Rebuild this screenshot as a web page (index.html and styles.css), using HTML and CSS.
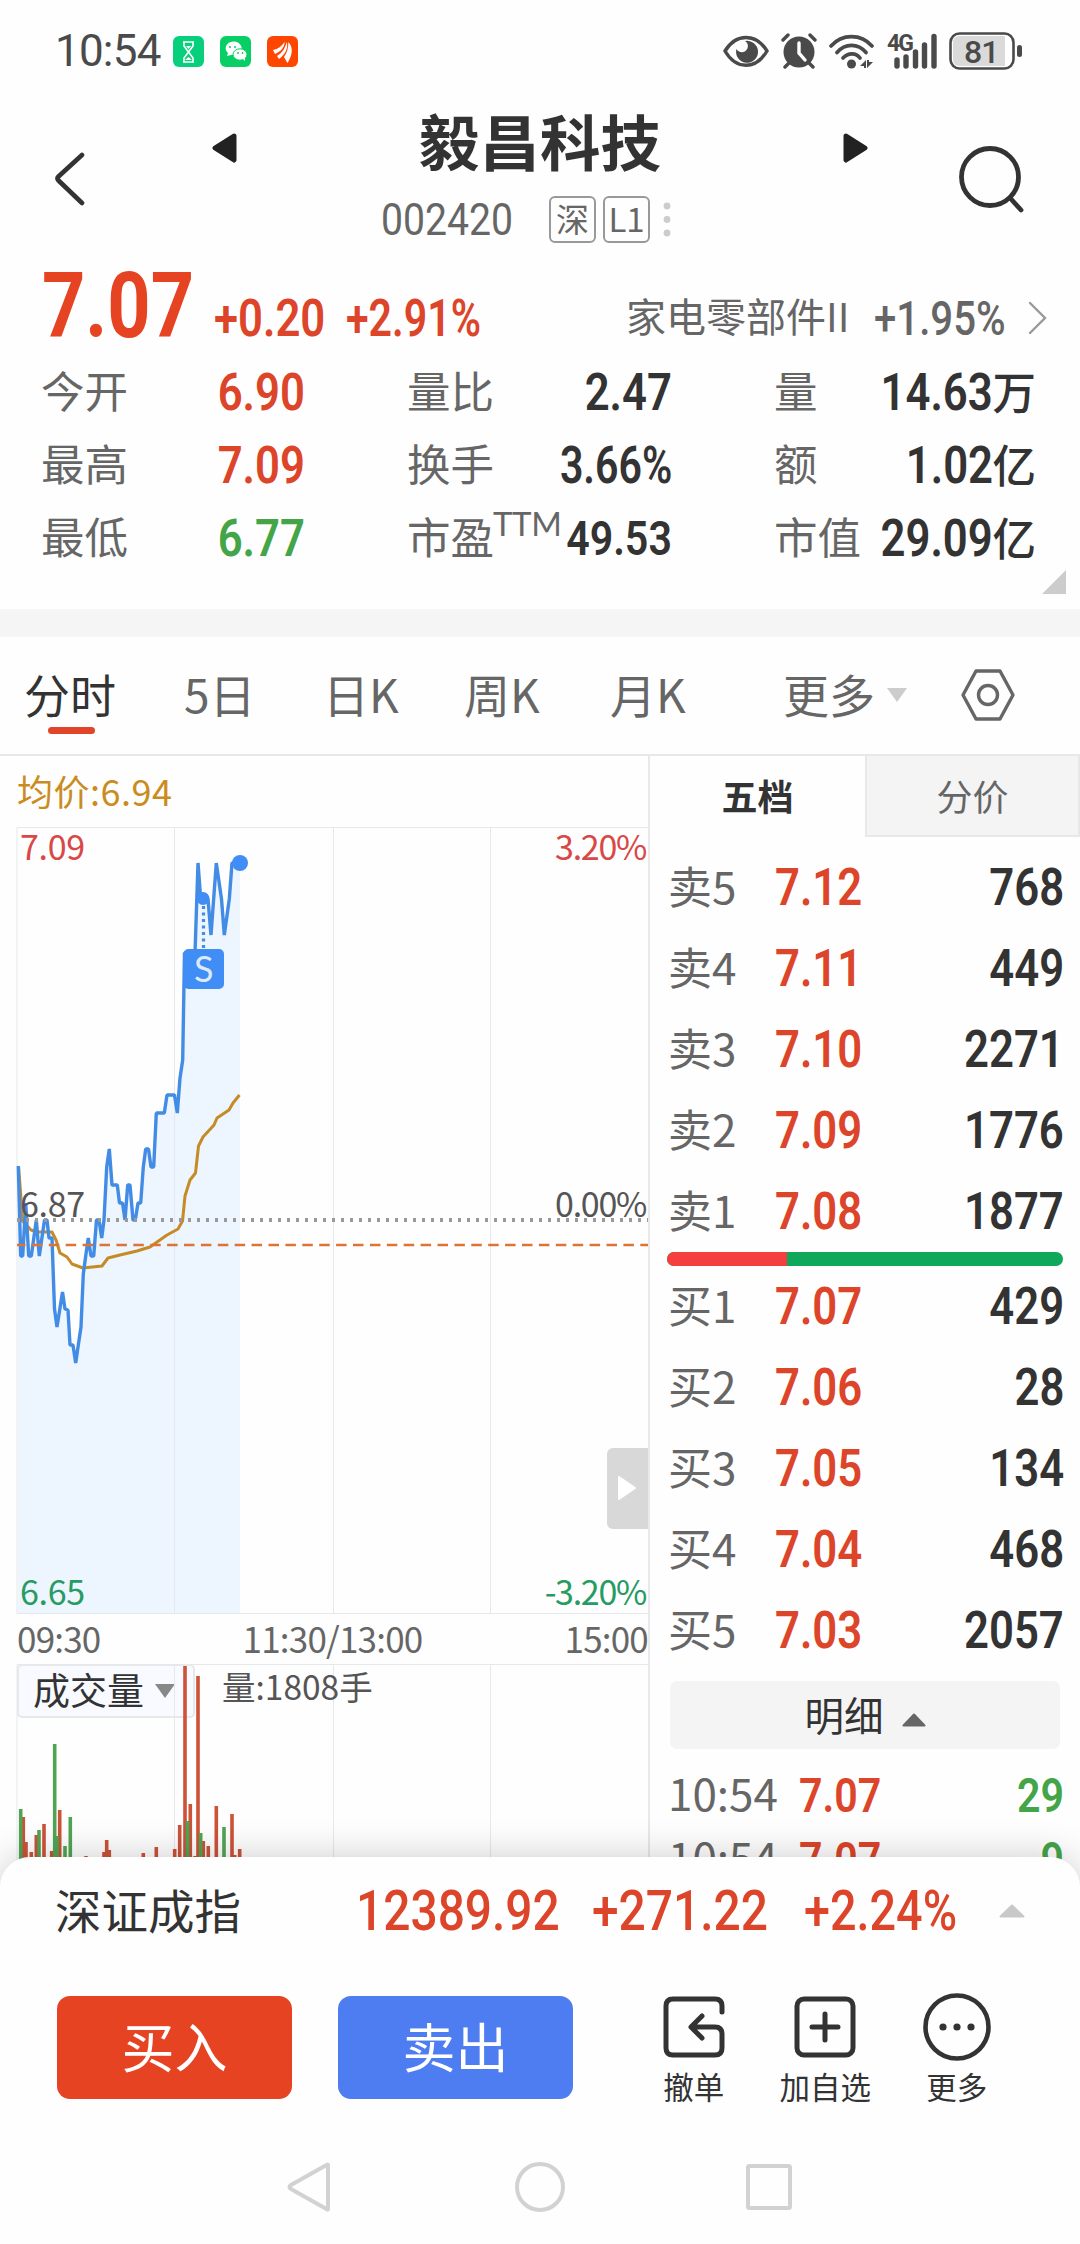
FILE: index.html
```html
<!DOCTYPE html>
<html lang="zh-CN">
<head>
  <meta charset="UTF-8">
  <meta name="viewport" content="width=device-width, initial-scale=1.0">
  <title>毅昌科技 002420</title>
  <link rel="stylesheet" href="styles.css">
</head>
<body>
  <div class="status-bar">
    <span class="clock">10:54</span>
    <div class="notices">
      <svg width="31" height="31" viewBox="0 0 31 31"><rect width="31" height="31" rx="6" fill="#08cf7c"/><g fill="none" stroke="#fff" stroke-width="1.6"><path d="M10 6h11M10 26h11M11 6v4l4.500 6L11 22v4M20 6v4l-4.500 6L20 22v4"/></g><path d="M13 10h5l-2.500 3zM12 24l3.500-3 3.500 3z" fill="#fff"/></svg>
      <svg width="31" height="31" viewBox="0 0 31 31"><rect width="31" height="31" rx="6" fill="#08ce66"/><path d="M7 20l1-3a8 6.700 0 1 1 4 1.800z" fill="#fff"/><ellipse cx="20" cy="18.500" rx="7" ry="5.700" fill="#fff" stroke="#08ce66"/><path d="M22 22l3 0v3z" fill="#fff"/><g fill="#08ce66"><circle cx="10" cy="11" r="1"/><circle cx="15" cy="11" r="1"/><circle cx="18" cy="17" r=".9"/><circle cx="22.500" cy="17" r=".9"/></g></svg>
      <svg width="31" height="31" viewBox="0 0 31 31"><rect width="31" height="31" rx="6" fill="#fe4600"/><g fill="#fff"><path d="M6 14C11 13 15 10 17.500 6 18 11 13 16 8 18z"/><path d="M10 20C15 17 18.500 12 19.500 6 22 11 18 19 12 23z"/><path d="M17 21C20 17 21.500 12 21.300 6 27 12 25 20 20.500 27z"/></g></svg>
    </div>
    <div class="sys-icons">
      <svg width="46" height="34" viewBox="0 0 46 34"><path d="M2 17C13-1 33-1 44 17 33 36 13 36 2 17z" fill="none" stroke="#4a4a4a" stroke-width="3.400"/><path d="M22 7a11 11 0 1 1-8.600 8c2 4 9 4.500 11-.5 1.200-3.500.4-5.500-2.400-7.500z" fill="#4a4a4a"/></svg>
      <svg width="36" height="36" viewBox="0 0 36 36"><circle cx="18" cy="19" r="15.500" fill="#4a4a4a"/><path d="M2 7l5-5M34 7l-5-5M4 34l5-5M32 34l-5-5" stroke="#4a4a4a" stroke-width="3.400" stroke-linecap="round"/><path d="M18 10v10l6 7" fill="none" stroke="#fff" stroke-width="3.400" stroke-linecap="round"/></svg>
      <svg width="46" height="36" viewBox="0 0 46 36"><g fill="none" stroke="#4a4a4a" stroke-width="3.600" stroke-linecap="round"><path d="M2 13C13 .5 32 .5 43 13M8 19.500C16 10 29 10 37 19.500M14 25c5-5.500 13-5.500 17 0"/></g><circle cx="22.500" cy="31" r="4.500" fill="#4a4a4a"/><path d="M31 33l6-6v8h-2v-2zM38 27h2v2h4l-6 6z" fill="#4a4a4a"/></svg>
      <svg width="50" height="36" viewBox="0 0 50 36"><text x="0" y="18" class="net">4G</text><path d="M10 33v-6M19 33V24M28.500 33V19M37.500 33V12M47 33V3.500" stroke="#4a4a4a" stroke-width="5.400" stroke-linecap="round"/></svg>
      <svg width="74" height="38" viewBox="0 0 74 38"><rect x="1.500" y="1.500" width="63" height="35" rx="9" fill="#fff" stroke="#4a4a4a" stroke-width="2.600"/><path d="M10 4h46v30H10a6 6 0 0 1-6-6V10a6 6 0 0 1 6-6z" fill="#dadada"/><rect x="68" y="13" width="5" height="12" rx="2.500" fill="#4a4a4a"/><text x="15" y="30.500" class="bat">81</text></svg>
    </div>
  </div>

  <div class="header">
    <svg class="back" width="32" height="56" viewBox="0 0 32 56"><path d="M28 4L4.500 25.500q-2 2 0 4L28 52" fill="none" stroke="#333" stroke-width="4.600" stroke-linecap="round"/></svg>
    <svg class="prev" width="26" height="30" viewBox="0 0 26 30"><path d="M22 3L3 15l19 12z" fill="#222" stroke="#222" stroke-width="5" stroke-linejoin="round"/></svg>
    <div class="title">
      <h1>毅昌科技</h1>
      <div class="code-row">
        <span class="num code">002420</span>
        <span class="tag">深</span>
        <span class="tag">L1</span>
        <svg width="8" height="36" viewBox="0 0 8 36" fill="#ccc"><circle cx="4" cy="5" r="3.400"/><circle cx="4" cy="18.500" r="3.400"/><circle cx="4" cy="32" r="3.400"/></svg>
      </div>
    </div>
    <svg class="next" width="26" height="30" viewBox="0 0 26 30"><path d="M4 3l19 12L4 27z" fill="#222" stroke="#222" stroke-width="5" stroke-linejoin="round"/></svg>
    <svg class="search" width="68" height="68" viewBox="0 0 68 68" fill="none" stroke="#333" stroke-width="4.800" stroke-linecap="round"><circle cx="32" cy="32" r="28.500"/><path d="M53 54l10 11"/></svg>
  </div>

  <div class="quote">
    <div class="price-row">
      <span class="num price">7.07</span>
      <span class="num chg">+0.20</span>
      <span class="num chg pct">+2.91%</span>
      <span class="sector">家电零部件II</span>
      <span class="num sector-pct">+1.95%</span>
      <svg class="more" width="22" height="36" viewBox="0 0 22 36"><path d="M3 3l15 15L3 33" fill="none" stroke="#999" stroke-width="2.400" stroke-linecap="round"/></svg>
    </div>
    <div class="stats">
      <div><label>今开</label><b class="num r up">6.90</b></div>
      <div><label>量比</label><b class="num r">2.47</b></div>
      <div><label>量</label><b class="num r">14.63<i>万</i></b></div>
      <div><label>最高</label><b class="num r up">7.09</b></div>
      <div><label>换手</label><b class="num r pct">3.66%</b></div>
      <div><label>额</label><b class="num r">1.02<i>亿</i></b></div>
      <div><label>最低</label><b class="num r down">6.77</b></div>
      <div><label>市盈<sup>TTM</sup></label><b class="num r small">49.53</b></div>
      <div><label>市值</label><b class="num r">29.09<i>亿</i></b></div>
    </div>
    <svg class="corner" width="26" height="26" viewBox="0 0 26 26"><path d="M25 1v24H1z" fill="#ccc"/></svg>
  </div>

  <div class="tabs">
    <span class="tab active">分时</span>
    <span class="tab">5日</span>
    <span class="tab">日K</span>
    <span class="tab">周K</span>
    <span class="tab">月K</span>
    <span class="tab">更多<svg width="20" height="14" viewBox="0 0 20 14"><path d="M0 0h20L10 14z" fill="#ccc"/></svg></span>
    <svg class="gear" width="56" height="54" viewBox="0 0 56 54" fill="none" stroke="#666" stroke-width="3.400" stroke-linejoin="round"><path d="M16 3h24l13 24-13 24H16L3 27z"/><circle cx="28" cy="27" r="9.500"/></svg>
  </div>

  <div class="main">
    <div class="chart">
      <div class="avg">均价:6.94</div>
      <div class="plot">
        <!-- coordinates are page pixels, the view starts at y=827 -->
        <svg width="648" height="787" viewBox="0 827 648 787" fill="none">
          <path d="M18 1166L20.700 1256 22.700 1256 25.700 1203 28.700 1256 31.300 1256 36.300 1220 39.300 1256 44.500 1220 47 1220 49 1238 52 1238 54.500 1309 57 1327 62.500 1292 65 1309 68 1310 70 1345 73 1345 75.700 1363 78.300 1345 81 1327 83.300 1274 88.300 1238 91 1256 93.700 1256 96.500 1220 99 1220 101.700 1238 104 1220 106.700 1167 109.300 1149 112 1185 117.300 1185 119.500 1203 122.500 1203 125 1220 127.700 1185 130 1185 133 1220 135.300 1220 138 1203 140.700 1203 143.300 1167 145.700 1149 148.500 1149 151 1167 153.700 1167 156.300 1113 164.300 1113 167 1095 174.500 1095 177.300 1113 180 1078 182.700 1060 184.500 953 195 953 198 863 200.700 899 208 899 211 935 216.300 863 224.300 935 232 863 240 863V1613H18z" fill="#edf5fe"/>
          <path d="M17 1613.500V827.500H648M17 1613.500H648M174.500 828V1613M333.500 828V1613M490.500 828V1613" stroke="#e6e8ea"/>
          <path d="M18.500 1166L21 1198 22.500 1221 31 1230 37 1232 52 1232 56 1240 60 1253 67 1257 72 1264 83 1268 102 1266 108 1258 120 1255 137 1251 150 1247 167 1235 178 1229 182.500 1221 185 1196 190 1180 195.500 1173 198.500 1146 203 1137 214 1125 217 1118 229 1110 233 1103 239.500 1095" stroke="#c58b26" stroke-width="3" stroke-linejoin="round"/>
          <path d="M18.300 1166L20.700 1256 22.700 1256 25.700 1203 28.700 1256 31.300 1256 36.300 1220 39.300 1256 44.500 1220 47 1220 49 1238 52 1238 54.500 1309 57 1327 62.500 1292 65 1309 68 1310 70 1345 73 1345 75.700 1363 78.300 1345 81 1327 83.300 1274 85.700 1256 88.300 1238 91 1256 93.700 1256 96.500 1220 99 1220 101.700 1238 104 1220 106.700 1167 109.300 1149 112 1185 117.300 1185 119.500 1203 122.500 1203 125 1220 127.700 1185 130 1185 133 1220 135.300 1220 138 1203 140.700 1203 143.300 1167 145.700 1149 148.500 1149 151 1167 153.700 1167 156.300 1113 164.300 1113 167 1095 174.500 1095 177.300 1113 180 1078 182.700 1060 184.500 953 195 953 198 863 200.700 899 208 899 211 935 216.300 863 221.500 899 224.300 935 229.300 899 232 863 240 863" stroke="#438ce6" stroke-width="3.400" stroke-linejoin="bevel"/>
          <path d="M17 1220H648" stroke="#999" stroke-width="4" stroke-dasharray="3 6"/>
          <path d="M17 1245H648" stroke="#dc7436" stroke-width="2.400" stroke-dasharray="10.500 6.400" stroke-dashoffset="2"/>
          <path d="M203.500 906V949" stroke="#438ce6" stroke-width="3.200" stroke-dasharray="3 3.500"/>
          <circle cx="203" cy="898.500" r="6.500" fill="#3f8df5"/>
          <circle cx="240" cy="863" r="8" fill="#3f8df5"/>
          <rect x="183.500" y="949" width="40.500" height="40" rx="5" fill="#3f8df5"/>
          <text x="203.700" y="982" class="s-mark">S</text>
        </svg>
        <span class="lab lt">7.09</span><span class="lab rt">3.20%</span>
        <span class="lab lm">6.87</span><span class="lab rm">0.00%</span>
        <span class="lab lb">6.65</span><span class="lab rb">-3.20%</span>
        <div class="handle"><svg width="20" height="26" viewBox="0 0 20 26"><path d="M2 2l16 11L2 24z" fill="#fff" stroke="#fff" stroke-width="2" stroke-linejoin="round"/></svg></div>
      </div>
      <div class="times"><span>09:30</span><span>11:30/13:00</span><span>15:00</span></div>
      <div class="volume">
        <svg width="648" height="200" viewBox="0 1663 648 200" fill="none">
          <path d="M17 1863V1664.500H648M174.500 1664V1863M333.500 1664V1863M490.500 1664V1863" stroke="#e6e8ea"/>
        </svg>
        <div class="vol-pick">成交量<svg width="20" height="14" viewBox="0 0 20 14"><path d="M0 0h20L10 14z" fill="#888"/></svg></div>
        <span class="vol-text">量:1808手</span>
        <svg width="648" height="200" viewBox="0 1663 648 200" fill="none" stroke-width="3.600">
          <path d="M174.500 1664V1863" stroke="#e6e8ea" stroke-width="1"/>
          <path d="M23.300 1863V1817M26 1863V1842M31.300 1863V1852M36.300 1863V1835M44 1863V1824M51.700 1863V1851M59.700 1863V1810M86 1863V1856M104 1863V1852M106.700 1863V1840M109.300 1863V1850M143.300 1863V1853M156.300 1863V1847M174.700 1863V1849M179.700 1863V1825M185 1863V1666M190.300 1863V1804M195 1863V1856M198 1863V1676M203.300 1863V1841M208.300 1863V1846M216.300 1863V1806M232 1863V1814M234.700 1863V1855M239.700 1863V1849" stroke="#cc5238"/>
          <path d="M20.700 1863V1809M39 1863V1830M54.700 1863V1744M57 1863V1836M65 1863V1846M70.300 1863V1817M187.500 1863V1821M200.700 1863V1833M224 1863V1827" stroke="#51a453"/>
        </svg>
      </div>
    </div>

    <div class="book">
      <div class="book-tabs"><span class="on">五档</span><span>分价</span></div>
      <div class="levels sell">
        <div class="row"><span>卖5</span><b class="num up">7.12</b><b class="num r">768</b></div>
        <div class="row"><span>卖4</span><b class="num up">7.11</b><b class="num r">449</b></div>
        <div class="row"><span>卖3</span><b class="num up">7.10</b><b class="num r">2271</b></div>
        <div class="row"><span>卖2</span><b class="num up">7.09</b><b class="num r">1776</b></div>
        <div class="row"><span>卖1</span><b class="num up">7.08</b><b class="num r">1877</b></div>
      </div>
      <div class="ratio"><i></i></div>
      <div class="levels">
        <div class="row"><span>买1</span><b class="num up">7.07</b><b class="num r">429</b></div>
        <div class="row"><span>买2</span><b class="num up">7.06</b><b class="num r">28</b></div>
        <div class="row"><span>买3</span><b class="num up">7.05</b><b class="num r">134</b></div>
        <div class="row"><span>买4</span><b class="num up">7.04</b><b class="num r">468</b></div>
        <div class="row"><span>买5</span><b class="num up">7.03</b><b class="num r">2057</b></div>
      </div>
      <div class="detail-btn">明细<svg width="24" height="14" viewBox="0 0 24 14"><path d="M12 1.500L22.500 12.500h-21z" fill="#666" stroke="#666" stroke-width="2" stroke-linejoin="round"/></svg></div>
      <div class="ticks">
        <div class="row"><span>10:54</span><b class="num up">7.07</b><b class="num r down">29</b></div>
        <div class="row"><span>10:54</span><b class="num up">7.07</b><b class="num r down">9</b></div>
      </div>
    </div>
  </div>

  <div class="sheet">
    <div class="index-row">
      <span class="name">深证成指</span>
      <span class="num v1">12389.92</span>
      <span class="num v2">+271.22</span>
      <span class="num v3">+2.24%</span>
      <svg width="26" height="14" viewBox="0 0 26 14"><path d="M13 1.500L24.500 12.500h-23z" fill="#c8c8c8" stroke="#c8c8c8" stroke-width="2" stroke-linejoin="round"/></svg>
    </div>
    <div class="actions">
      <div class="btn buy">买入</div>
      <div class="btn sell-btn">卖出</div>
      <div class="act a1">
        <svg width="70" height="70" viewBox="0 0 70 70" fill="none" stroke="#333" stroke-width="5" stroke-linecap="round" stroke-linejoin="round"><path d="M63 20v-6q0-7-7-7H14q-7 0-7 7v42q0 7 7 7h42q7 0 7-7V42q0-7-7-7H33M43 24L32 35l11 11"/></svg>
        撤单
      </div>
      <div class="act a2">
        <svg width="70" height="70" viewBox="0 0 70 70" fill="none" stroke="#333" stroke-width="5" stroke-linecap="round"><rect x="7" y="7" width="56" height="56" rx="7"/><path d="M35 22v26M22 35h26"/></svg>
        加自选
      </div>
      <div class="act a3">
        <svg width="70" height="70" viewBox="0 0 70 70" fill="#333"><circle cx="35" cy="35" r="31.500" fill="none" stroke="#333" stroke-width="4.600"/><circle cx="21" cy="35" r="3.600"/><circle cx="35" cy="35" r="3.600"/><circle cx="49" cy="35" r="3.600"/></svg>
        更多
      </div>
    </div>
    <div class="nav">
      <svg width="46" height="54" viewBox="0 0 46 54"><path d="M42 5v44q0 1-1.500 0L5 29q-3-2 0-4L40.500 5q1.500-1 1.500 0z"/></svg>
      <svg width="54" height="54" viewBox="0 0 54 54"><circle cx="27" cy="27" r="23"/></svg>
      <svg width="50" height="54" viewBox="0 0 50 54"><rect x="4" y="6" width="42" height="42" rx="1.500"/></svg>
    </div>
  </div>
</body>
</html>
```
FILE: styles.css
```css
* {
  box-sizing: border-box;
}
body {
  margin: 0;
  width: 1080px;
  height: 2244px;
  overflow: hidden;
  position: relative;
  background: #fefefe;
  color: #333;
  font-family: "Noto Sans CJK SC", sans-serif;
  font-size: 43.500px;
}
svg {
  display: block;
  flex: none;
}
b, i {
  font-style: normal;
}
.up { color: #dc452a; }
.down { color: #44a548; }

/* narrow figures */
.num {
  display: inline-block;
  font-family: Roboto, "Noto Sans CJK SC", sans-serif;
  font-weight: 600;
  font-size: 52px;
  line-height: 1;
  white-space: nowrap;
  transform: scaleX(.84);
  transform-origin: left center;
}
.num.r { transform-origin: right center; }
.num.pct { transform: scaleX(.79); }

/* status bar */
.status-bar {
  display: flex;
  align-items: center;
  height: 102px;
  padding: 0 57px 0 55px;
}
.clock {
  width: 118px;
  font-family: Roboto, sans-serif;
  font-size: 44px;
  letter-spacing: -.8px;
  color: #4a4a4a;
}
.notices {
  display: flex;
  gap: 16px;
}
.sys-icons {
  display: flex;
  align-items: center;
  gap: 12px;
  margin-left: auto;
}
.net {
  font: bold 23px Roboto, sans-serif;
  letter-spacing: -2px;
  fill: #4a4a4a;
}
.bat {
  font: 500 32px Roboto, sans-serif;
  letter-spacing: -1px;
  fill: #4a4a4a;
}

/* header */
.header {
  display: flex;
  height: 148px;
  padding-left: 54px;
}
.back { margin-top: 49px; }
.prev { margin: 31px 0 0 126px; }
.title {
  width: 337px;
  margin-left: 143px;
  margin-right: 124px;
}
.title h1 {
  margin: -4px 0 0 38px;
  font-size: 60.500px;
  line-height: 84px;
  font-weight: 700;
}
.code-row {
  display: flex;
  align-items: center;
  height: 48px;
  margin-top: 13px;
}
.code {
  width: 168px;
  font-size: 45px;
  font-weight: 400;
}
.code-row .code {
  color: #666;
  transform: scaleX(.87);
}
.tag {
  width: 47px;
  height: 47px;
  margin-right: 7px;
  border: 2px solid #999;
  border-radius: 6px;
  font-size: 33px;
  line-height: 41px;
  text-align: center;
  color: #666;
}
.code-row svg { margin-left: 6px; }
.next { margin-top: 31px; margin-left: 0; }
.search { margin: 43px 0 0 90px; }

/* quote */
.quote {
  position: relative;
  height: 387px;
  border-bottom: 28px solid #f5f5f5;
}
.price-row {
  display: flex;
  height: 105px;
  padding-left: 42px;
}
.price-row .price {
  width: 172px;
  font-size: 90px;
  font-weight: 700;
  margin-top: 12px;
  color: #e64323;
  transform: scaleX(.84);
}
.chg {
  width: 132px;
  margin-top: 43px;
  color: #dc452a;
}
.sector {
  margin: 36px 0 0 147px;
  width: 248px;
  font-size: 40px;
  line-height: 58px;
  white-space: nowrap;
  color: #666;
}
.chg.pct { width: 133px; }
.price-row .sector-pct {
  margin-top: 44px;
  width: 153px;
  font-size: 49px;
  font-weight: 500;
  color: #666;
  transform: scaleX(.82);
}
.more { margin-top: 50px; }
.stats {
  display: grid;
  grid-template-columns: 264px 265px 262px;
  grid-auto-rows: 73px;
  column-gap: 102px;
  padding-left: 41px;
}
.stats div {
  position: relative;
  display: flex;
  align-items: center;
  justify-content: space-between;
}
.stats label {
  margin-top: -4px;
  line-height: 60px;
  white-space: nowrap;
  flex: none;
  width: 60px;
  color: #666;
}
.stats .num { margin-top: 2px; }
.stats i {
  display: inline-block;
  font-size: 45px;
  font-weight: 500;
  transform: scaleX(1.15);
  transform-origin: right;
  margin-left: 6px;
}
.stats sup {
  position: absolute;
  left: 86px;
  top: 1px;
  font-family: Lato, sans-serif;
  font-size: 33px;
  line-height: 42px;
  letter-spacing: -.4px;
}
.stats .small { font-size: 49px; }
.corner {
  position: absolute;
  right: 13px;
  top: 319px;
}

/* period tabs */
.tabs {
  display: flex;
  align-items: center;
  height: 119px;
  padding: 0 0 2px 24px;
  border-bottom: 2px solid #e8e8e8;
  color: #666;
  font-size: 46px;
}
.tab {
  position: relative;
  display: flex;
  align-items: center;
  width: 144px;
  line-height: 64px;
  margin-top: -3px;
  white-space: nowrap;
}
.tab:first-child { width: 160px; }
.tab:nth-child(2) { width: 139px; }
.tab:nth-child(3) { width: 141px; }
.tab:nth-child(4) { width: 146px; }
.tab:nth-child(5) { width: 173px; }
.tab:nth-child(6) { width: 177px; }
.tab svg { margin: 4px 0 0 12px; }
.active { color: #333; }
.active::after {
  content: "";
  position: absolute;
  left: 24px;
  bottom: -9px;
  width: 47px;
  height: 7px;
  border-radius: 4px;
  background: #e0452a;
}

.main { display: flex; }

/* intraday chart */
.chart {
  width: 650px;
  height: 1107px;
  border-right: 2px solid #e8e8e8;
}
.avg {
  height: 71px;
  padding-left: 17px;
  font-size: 36px;
  line-height: 68px;
  letter-spacing: .5px;
  color: #cb8c1f;
}
.plot {
  position: relative;
  height: 787px;
}
.s-mark {
  font: 36px Lato, sans-serif;
  fill: #dceafd;
  text-anchor: middle;
}
.lab {
  position: absolute;
  font-size: 34px;
  line-height: 34px;
  letter-spacing: -.8px;
  color: #555;
}
.lt, .lm, .lb { left: 20px; letter-spacing: -.3px; }
.rt, .rm, .rb { right: 2px; letter-spacing: -1.300px; }
.lt, .rt { top: 2px; color: #d94848; }
.lm, .rm { top: 359px; }
.lb, .rb { top: 747px; color: #269b62; }
.handle {
  position: absolute;
  right: 0;
  top: 621px;
  width: 41px;
  height: 81px;
  padding: 27px 10px;
  border-radius: 6px 0 0 6px;
  background: #d8d8d8;
}
.times {
  position: relative;
  display: flex;
  justify-content: space-between;
  height: 49px;
  padding: 0 0 0 17px;
  font-size: 35px;
  line-height: 47px;
  letter-spacing: -.8px;
  color: #666;
}
.volume {
  position: relative;
  height: 200px;
}
.volume > svg {
  position: absolute;
  left: 0;
  top: 0;
}
.vol-pick {
  position: absolute;
  left: 17px;
  top: 1px;
  width: 178px;
  height: 54px;
  display: flex;
  align-items: center;
  padding: 0 0 4px 14px;
  border: 2px solid #e6e8ea;
  border-radius: 5px;
  background: #f8faff;
  font-size: 37px;
  color: #333;
}
.vol-pick svg { margin: 4px 0 0 11px; }
.vol-text {
  position: absolute;
  left: 222px;
  top: -1px;
  font-size: 33.500px;
  line-height: 48px;
  color: #555;
}

/* order book */
.book { width: 430px; }
.book-tabs {
  display: flex;
  height: 81px;
  font-size: 36px;
  line-height: 79px;
  text-align: center;
}
.book-tabs span {
  width: 215px;
  background: #f4f4f4;
  border: 2px solid #e8e8e8;
  border-top: 0;
  color: #666;
}
.book-tabs .on {
  background: none;
  border: 0;
  color: #333;
  font-weight: 700;
}
.levels { padding-top: 3px; }
.sell { padding-top: 10px; }
.row {
  display: flex;
  align-items: center;
  height: 81px;
  padding: 0 16px 0 18px;
  font-size: 44px;
}
.row span {
  width: 107px;
  margin-top: -6px;
  color: #666;
}
.row .num { margin-top: 1px; }
.row .r { margin-left: auto; }
.ratio {
  width: 396px;
  height: 14px;
  margin: 0 17px -3px;
  border-radius: 7px;
  background: #0fa85a;
  overflow: hidden;
}
.ratio i {
  display: block;
  width: 120px;
  height: 14px;
  background: #f53e3e;
}
.detail-btn {
  display: flex;
  justify-content: center;
  align-items: center;
  height: 68px;
  width: 390px;
  margin: 10px 20px 0;
  padding-bottom: 4px;
  border-radius: 7px;
  background: #f4f4f4;
  font-size: 39.500px;
}
.detail-btn svg { margin: 14px 0 0 18px; }
.ticks { padding-top: 14px; }
.ticks .row { height: 64px; }
.ticks span { width: 131px; }
.ticks .num { font-size: 49px; }

/* bottom sheet */
.sheet {
  position: absolute;
  left: 0;
  top: 1857px;
  width: 1080px;
  height: 387px;
  border-radius: 30px 30px 0 0;
  background: #fefefe;
  box-shadow: 0 0 38px rgba(0, 0, 0, .2);
}
.index-row {
  display: flex;
  align-items: center;
  height: 108px;
  padding-left: 55px;
}
.index-row .name {
  width: 301px;
  margin-top: -5px;
  font-size: 46.500px;
}
.index-row .num {
  font-size: 56px;
  font-weight: 500;
  color: #dc452a;
  transform: scaleX(.855);
}
.v1 { width: 236px; }
.v2 { width: 212px; }
.v3 { width: 195px; }
.index-row .v3 { transform: scaleX(.835); }
.actions {
  display: flex;
  height: 170px;
  padding: 31px 0 0 57px;
}
.btn {
  width: 235px;
  height: 103px;
  margin-right: 46px;
  border-radius: 13px;
  font-size: 53px;
  line-height: 99px;
  text-align: center;
  color: #fff;
}
.buy { background: #e64323; }
.sell-btn { background: #4d7df0; }
.act {
  width: 131.500px;
  display: flex;
  flex-direction: column;
  align-items: center;
  margin-top: -4px;
  font-size: 30.500px;
  line-height: 48px;
}
.a1 { margin-left: 9px; }
.nav {
  display: flex;
  height: 54px;
  margin: 25px 0 0 286px;
  fill: none;
  stroke: #d2d2d2;
  stroke-width: 4px;
}
.nav svg:nth-child(2) { margin-left: 181px; }
.nav svg:nth-child(3) { margin-left: 177px; }
```
